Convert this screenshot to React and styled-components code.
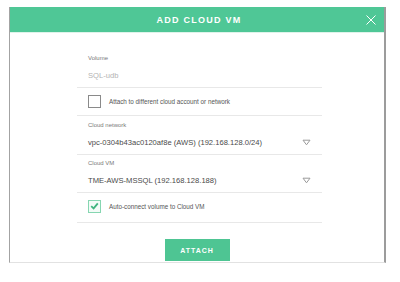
import React from "react";
import styled, { createGlobalStyle } from "styled-components";

const GlobalStyle = createGlobalStyle`
  html, body {
    margin: 0;
    padding: 0;
    background: #ffffff;
  }
  body {
    font-family: "Liberation Sans", Arial, sans-serif;
  }
`;

const Dialog = styled.div`
  margin: 7px 0 0 9px;
  width: 377px;
  height: 256px;
  box-sizing: border-box;
  border-left: 1.5px solid #a3a3a3;
  border-right: 2.5px solid #9c9c9c;
  border-bottom: 1.5px solid #e2e2e2;
  display: flex;
  flex-direction: column;
  background: #ffffff;
`;

const Header = styled.div`
  height: 25px;
  background: #4fc796;
  border-bottom: 1px solid #dff3ea;
  display: flex;
  align-items: center;
  justify-content: center;
  position: relative;
`;

const Title = styled.h1`
  margin: 0 0 0 4px;
  color: #ffffff;
  font-size: 9px;
  font-weight: 700;
  letter-spacing: 1.25px;
`;

const Close = styled.button`
  position: absolute;
  right: 8px;
  top: 8px;
  width: 10px;
  height: 10px;
  padding: 0;
  border: none;
  background: none;
  display: flex;
`;

const Form = styled.div`
  margin: 17px 0 0 67px;
  width: 245px;
  display: flex;
  flex-direction: column;
`;

const Field = styled.div`
  padding: ${(p) => p.$top || 0}px 11px 3px;
  border-bottom: 1px solid #e8e8e8;
  display: flex;
  flex-direction: column;
`;

const Label = styled.span`
  font-size: 6px;
  line-height: 16px;
  color: #7a7a7a;
`;

const ValueRow = styled.div`
  height: 18px;
  display: flex;
  align-items: center;
  justify-content: space-between;
`;

const Value = styled.span`
  font-size: 7.6px;
  color: ${(p) => (p.$muted ? "#b3b3b3" : "#4a4a4a")};
`;

const CheckRow = styled.div`
  height: ${(p) => p.$h}px;
  padding: 0 11px ${(p) => p.$pb || 0}px;
  box-sizing: border-box;
  border-bottom: 1px solid #e8e8e8;
  display: flex;
  align-items: center;
  gap: 8px;
`;

const Box = styled.span`
  width: 13px;
  height: 13px;
  box-sizing: border-box;
  border: 1.5px solid ${(p) => (p.$checked ? "#86d6b1" : "#8a8a8a")};
  background: ${(p) => (p.$checked ? "#f3fbf7" : "#ffffff")};
  display: flex;
  align-items: center;
  justify-content: center;
`;

const CheckText = styled.span`
  font-size: 6.3px;
  color: #555555;
`;

const Footer = styled.div`
  display: flex;
  justify-content: center;
  padding-top: 16px;
`;

const Button = styled.button`
  width: 65px;
  height: 22px;
  border: none;
  background: #4ec593;
  color: #ffffff;
  font-family: "Liberation Sans", Arial, sans-serif;
  font-size: 7px;
  font-weight: 700;
  letter-spacing: 1px;
  padding: 0;
`;

const Caret = () => (
  <svg width="9" height="7" viewBox="0 0 9 7">
    <path d="M1 1.2 H8 L4.5 5.8 Z" fill="none" stroke="#9a9a9a" strokeWidth="1" strokeLinejoin="round" />
  </svg>
);

const Check = () => (
  <svg width="9" height="8" viewBox="0 0 9 8">
    <path d="M1.2 4.2 L3.6 6.4 L7.8 1.4" fill="none" stroke="#3fb57f" strokeWidth="1.8" />
  </svg>
);

export default function App() {
  return (
    <>
      <GlobalStyle />
      <Dialog>
        <Header>
          <Title>ADD CLOUD VM</Title>
          <Close aria-label="close">
            <svg width="10" height="10" viewBox="0 0 10 10">
              <path d="M0.5 0.5 L9.5 9.5 M9.5 0.5 L0.5 9.5" stroke="#ffffff" strokeWidth="1" />
            </svg>
          </Close>
        </Header>
        <Form>
          <Field>
            <Label>Volume</Label>
            <ValueRow>
              <Value $muted>SQL-udb</Value>
            </ValueRow>
          </Field>
          <CheckRow $h={28}>
            <Box />
            <CheckText>Attach to different cloud account or network</CheckText>
          </CheckRow>
          <Field $top={1}>
            <Label>Cloud network</Label>
            <ValueRow>
              <Value>vpc-0304b43ac0120af8e (AWS) (192.168.128.0/24)</Value>
              <Caret />
            </ValueRow>
          </Field>
          <Field>
            <Label>Cloud VM</Label>
            <ValueRow>
              <Value>TME-AWS-MSSQL (192.168.128.188)</Value>
              <Caret />
            </ValueRow>
          </Field>
          <CheckRow $h={30} $pb={3}>
            <Box $checked>
              <Check />
            </Box>
            <CheckText>Auto-connect volume to Cloud VM</CheckText>
          </CheckRow>
        </Form>
        <Footer>
          <Button>ATTACH</Button>
        </Footer>
      </Dialog>
    </>
  );
}
